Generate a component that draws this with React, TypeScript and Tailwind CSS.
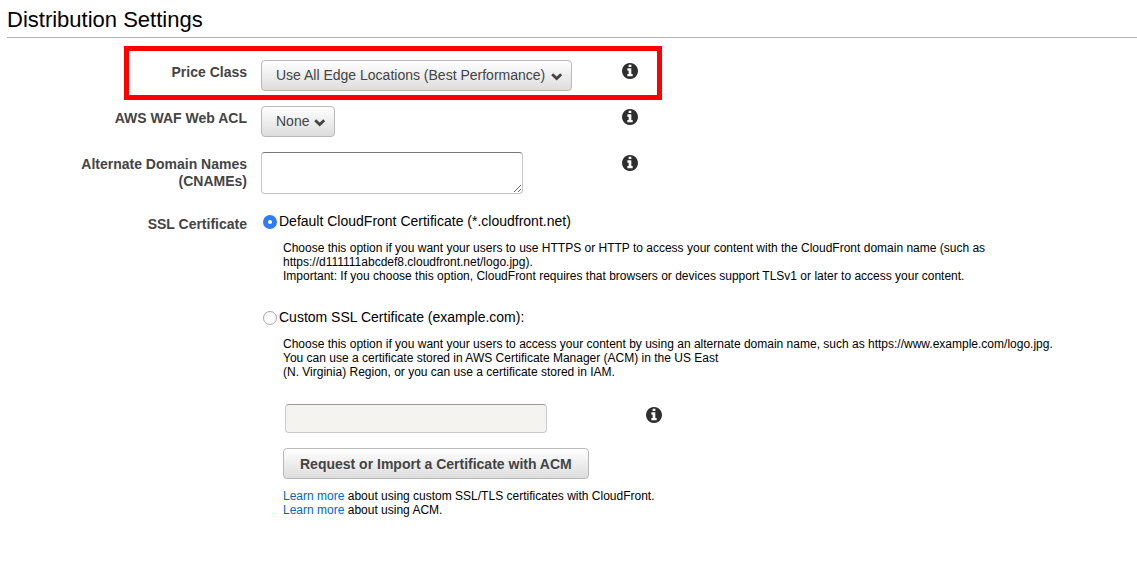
import React, { useState } from "react";

function InfoButton({ label }: { label: string }) {
  return (
    <button type="button" aria-label={label} className="block size-4 shrink-0 text-[#2f2f2f]">
      <svg viewBox="0 0 1536 1536" className="size-4" fill="currentColor" aria-hidden="true">
        <path d="M1024 1248v-160q0-14-9-23t-23-9h-96v-512q0-14-9-23t-23-9H544q-14 0-23 9t-9 23v160q0 14 9 23t23 9h96v320h-96q-14 0-23 9t-9 23v160q0 14 9 23t23 9h448q14 0 23-9t9-23zM896 352V192q0-14-9-23t-23-9H672q-14 0-23 9t-9 23v160q0 14 9 23t23 9h192q14 0 23-9t9-23zM1536 768q0 209-103 385.5T1153.5 1433 768 1536t-385.5-103T103 1153.5 0 768t103-385.5T382.5 103 768 0t385.5 103T1433 382.5 1536 768z" />
      </svg>
    </button>
  );
}

function SelectButton({ id, option }: { id: string; option: string }) {
  return (
    <div className="relative inline-block">
      <select
        id={id}
        className="block h-[31px] appearance-none rounded border border-[#b8b8b8] bg-linear-to-b from-white to-[#dddddd] pr-6 pb-[2px] pl-[14px] text-sm text-[#444444]"
      >
        <option>{option}</option>
      </select>
      <svg
        viewBox="0 0 12 8"
        className="pointer-events-none absolute top-[13px] right-[9px] h-2 w-3"
        fill="none"
        stroke="#444444"
        strokeWidth="2.8"
        aria-hidden="true"
      >
        <path d="M1.200 1.300 5.700 5.500l4.500-4.200" />
      </svg>
    </div>
  );
}

type RowProps = {
  htmlFor: string;
  label: React.ReactNode;
  info: string;
  children: React.ReactNode;
  highlighted?: boolean;
};

function Row({ htmlFor, label, info, children, highlighted }: RowProps) {
  return (
    <div className="relative flex min-h-[31px] items-start">
      {highlighted && (
        <div className="pointer-events-none absolute -top-[14px] left-[117px] h-[54px] w-[538px] border-[5px] border-[#ff0000]" />
      )}
      <label
        htmlFor={htmlFor}
        className="mr-[14px] w-60 shrink-0 pt-1 text-right text-sm leading-[17px] font-bold text-[#444444]"
      >
        {label}
      </label>
      <div className="w-[361px] shrink-0">{children}</div>
      <div className="pt-[3px]">
        <InfoButton label={info} />
      </div>
    </div>
  );
}

export default function App() {
  const [certificate, setCertificate] = useState("default");
  const radio =
    "size-[14px] shrink-0 appearance-none rounded-full border border-[#a6a6a6] bg-white checked:border-[5px] checked:border-[#2f7cf6]";

  return (
    <main className="bg-white pb-12 pl-[7px] font-['Liberation_Sans',Arial,sans-serif] text-black">
      <h1 className="border-b border-[#b5b5b5] pt-[7px] pb-1 text-[22px] leading-[26px]">
        Distribution Settings
      </h1>

      <form className="pt-[22px]" onSubmit={(event) => event.preventDefault()}>
        <div className="flex flex-col gap-[15px]">
          <Row htmlFor="price-class" label="Price Class" info="About price class" highlighted>
            <SelectButton id="price-class" option="Use All Edge Locations (Best Performance)" />
          </Row>
          <Row htmlFor="web-acl" label="AWS WAF Web ACL" info="About web ACL">
            <SelectButton id="web-acl" option="None" />
          </Row>
          <Row
            htmlFor="cnames"
            label={
              <>
                Alternate Domain Names
                <br />
                (CNAMEs)
              </>
            }
            info="About alternate domain names"
          >
            <textarea
              id="cnames"
              className="block h-[42px] w-[262px] resize rounded border border-[#c4c4c4] border-t-[#777777] bg-white px-2 py-1 text-sm"
            />
          </Row>
        </div>

        <div role="radiogroup" aria-labelledby="ssl-label" className="flex items-start pt-[18px]">
          <div
            id="ssl-label"
            className="mr-[14px] w-60 shrink-0 pt-1 text-right text-sm leading-[17px] font-bold text-[#444444]"
          >
            SSL Certificate
          </div>

          <div className="min-w-0 flex-1 pt-px pl-[2px] text-xs leading-[14px]">
            <label className="flex items-center gap-[2px] text-sm leading-[17px]">
              <input
                type="radio"
                name="certificate"
                value="default"
                checked={certificate === "default"}
                onChange={() => setCertificate("default")}
                className={radio}
              />
              Default CloudFront Certificate (*.cloudfront.net)
            </label>
            <p className="pt-[11px] pl-5">
              Choose this option if you want your users to use HTTPS or HTTP to access your content
              with the CloudFront domain name (such as
              <br />
              https://d111111abcdef8.cloudfront.net/logo.jpg).
              <br />
              Important: If you choose this option, CloudFront requires that browsers or devices
              support TLSv1 or later to access your content.
            </p>

            <label className="mt-[26px] flex items-center gap-[2px] text-sm leading-[17px]">
              <input
                type="radio"
                name="certificate"
                value="custom"
                checked={certificate === "custom"}
                onChange={() => setCertificate("custom")}
                className={radio}
              />
              Custom SSL Certificate (example.com):
            </label>
            <div className="pt-[11px] pl-5">
              <p>
                Choose this option if you want your users to access your content by using an
                alternate domain name, such as https://www.example.com/logo.jpg.
                <br />
                You can use a certificate stored in AWS Certificate Manager (ACM) in the US East
                <br />
                (N. Virginia) Region, or you can use a certificate stored in IAM.
              </p>

              <div className="flex items-start pt-[25px] pl-[2px]">
                <div className="w-[361px] shrink-0">
                  <input
                    type="text"
                    aria-label="Custom SSL certificate"
                    disabled={certificate !== "custom"}
                    className="block h-[29px] w-[262px] rounded border border-[#c8c8c8] border-t-[#999999] bg-white px-2 text-sm disabled:bg-[#f4f3f0]"
                  />
                </div>
                <div className="pt-[3px]">
                  <InfoButton label="About custom SSL certificates" />
                </div>
              </div>

              <button
                type="button"
                className="mt-[15px] block h-[31px] rounded border border-[#b8b8b8] bg-linear-to-b from-white to-[#dddddd] px-4 text-sm font-bold text-[#444444]"
              >
                Request or Import a Certificate with ACM
              </button>

              <p className="pt-[10px]">
                <a href="#ssl" className="text-[#0066cc]">Learn more</a> about using custom SSL/TLS
                certificates with CloudFront.
                <br />
                <a href="#acm" className="text-[#0066cc]">Learn more</a> about using ACM.
              </p>
            </div>
          </div>
        </div>
      </form>
    </main>
  );
}
